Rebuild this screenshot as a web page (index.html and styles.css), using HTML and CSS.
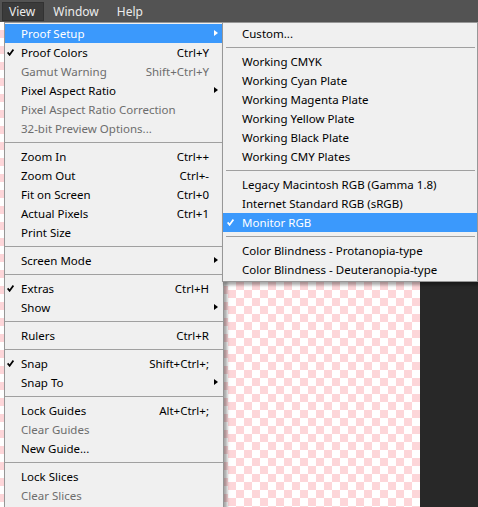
FILE: index.html
```html
<!DOCTYPE html>
<html>
<head>
<meta charset="utf-8">
<link rel="stylesheet" href="styles.css">
</head>
<body>
<div class="app">
  <div class="menubar">
    <div class="mb-item active">View</div>
    <div class="mb-item">Window</div>
    <div class="mb-item">Help</div>
  </div>
  <div class="workspace">
    <div class="strip"></div>
    <div class="canvas"></div>
    <div class="pasteboard"></div>
  </div>

  <div class="menu main-menu">
    <div class="row hl"><span class="label">Proof Setup</span><span class="arrow"></span></div>
    <div class="row"><span class="check"><svg width="7" height="7" viewBox="0 0 7 7"><path d="M0.6 3.4 L2.6 5.8 L6.4 0.6" fill="none" stroke="#000" stroke-width="1.7"/></svg></span><span class="label">Proof Colors</span><span class="key">Ctrl+Y</span></div>
    <div class="row dis"><span class="label">Gamut Warning</span><span class="key">Shift+Ctrl+Y</span></div>
    <div class="row"><span class="label">Pixel Aspect Ratio</span><span class="arrow"></span></div>
    <div class="row dis"><span class="label">Pixel Aspect Ratio Correction</span></div>
    <div class="row dis"><span class="label">32-bit Preview Options...</span></div>
    <div class="sep"></div>
    <div class="row"><span class="label">Zoom In</span><span class="key">Ctrl++</span></div>
    <div class="row"><span class="label">Zoom Out</span><span class="key">Ctrl+-</span></div>
    <div class="row"><span class="label">Fit on Screen</span><span class="key">Ctrl+0</span></div>
    <div class="row"><span class="label">Actual Pixels</span><span class="key">Ctrl+1</span></div>
    <div class="row"><span class="label">Print Size</span></div>
    <div class="sep"></div>
    <div class="row"><span class="label">Screen Mode</span><span class="arrow"></span></div>
    <div class="sep"></div>
    <div class="row"><span class="check"><svg width="7" height="7" viewBox="0 0 7 7"><path d="M0.6 3.4 L2.6 5.8 L6.4 0.6" fill="none" stroke="#000" stroke-width="1.7"/></svg></span><span class="label">Extras</span><span class="key">Ctrl+H</span></div>
    <div class="row"><span class="label">Show</span><span class="arrow"></span></div>
    <div class="sep"></div>
    <div class="row"><span class="label">Rulers</span><span class="key">Ctrl+R</span></div>
    <div class="sep"></div>
    <div class="row"><span class="check"><svg width="7" height="7" viewBox="0 0 7 7"><path d="M0.6 3.4 L2.6 5.8 L6.4 0.6" fill="none" stroke="#000" stroke-width="1.7"/></svg></span><span class="label">Snap</span><span class="key">Shift+Ctrl+;</span></div>
    <div class="row"><span class="label">Snap To</span><span class="arrow"></span></div>
    <div class="sep"></div>
    <div class="row"><span class="label">Lock Guides</span><span class="key">Alt+Ctrl+;</span></div>
    <div class="row dis"><span class="label">Clear Guides</span></div>
    <div class="row"><span class="label">New Guide...</span></div>
    <div class="sep"></div>
    <div class="row"><span class="label">Lock Slices</span></div>
    <div class="row dis"><span class="label">Clear Slices</span></div>
  </div>

  <div class="menu sub-menu">
    <div class="row"><span class="label">Custom...</span></div>
    <div class="sep"></div>
    <div class="row"><span class="label">Working CMYK</span></div>
    <div class="row"><span class="label">Working Cyan Plate</span></div>
    <div class="row"><span class="label">Working Magenta Plate</span></div>
    <div class="row"><span class="label">Working Yellow Plate</span></div>
    <div class="row"><span class="label">Working Black Plate</span></div>
    <div class="row"><span class="label">Working CMY Plates</span></div>
    <div class="sep"></div>
    <div class="row"><span class="label">Legacy Macintosh RGB (Gamma 1.8)</span></div>
    <div class="row"><span class="label">Internet Standard RGB (sRGB)</span></div>
    <div class="row hl"><span class="check"><svg width="7" height="7" viewBox="0 0 7 7"><path d="M0.6 3.4 L2.6 5.8 L6.4 0.6" fill="none" stroke="#fff" stroke-width="1.7"/></svg></span><span class="label">Monitor RGB</span></div>
    <div class="sep"></div>
    <div class="row"><span class="label">Color Blindness - Protanopia-type</span></div>
    <div class="row"><span class="label">Color Blindness - Deuteranopia-type</span></div>
  </div>
</div>
</body>
</html>
```
FILE: styles.css
```css
html, body {
  margin: 0;
  padding: 0;
}
body {
  width: 478px;
  height: 507px;
  overflow: hidden;
  background: #282828;
  font-family: "Noto Sans", "Open Sans", sans-serif;
  font-size: 11.5px;
}
.app {
  position: relative;
  width: 478px;
  height: 507px;
  overflow: hidden;
}
.menubar {
  height: 22px;
  background: #535353;
  display: flex;
  align-items: flex-start;
  padding-left: 2px;
  box-sizing: border-box;
}
.mb-item {
  height: 19px;
  margin-top: 2px;
  line-height: 17px;
  padding: 0 8px;
  color: #ececec;
  font-size: 12px;
  box-sizing: border-box;
  border: 1px solid transparent;
}
.mb-item.active {
  background: #3b3b3b;
  border-color: #323232;
  padding: 0 8px 0 6px;
}
.workspace {
  height: 485px;
  display: grid;
  grid-template-columns: 228px 192px 1fr;
}
.strip {
  background-color: #f3f3f3;
  background-image: conic-gradient(#fdd6d9 25%, #fff 0 50%, #fdd6d9 0 75%, #fff 0);
  background-size: 16px 16px;
}
.canvas {
  background-color: #fff;
  background-image: conic-gradient(#fdd6d9 25%, #fff 0 50%, #fdd6d9 0 75%, #fff 0);
  background-size: 16px 16px;
  background-position: 0 4px;
}
.pasteboard {
  background: #282828;
}
.menu {
  position: absolute;
  background: #f0f0f0;
  border: 1px solid #979797;
  box-sizing: border-box;
  padding: 1px 0 2px;
  color: #000;
}
.main-menu {
  left: 4px;
  top: 22px;
  width: 220px;
  box-shadow: 3px 3px 3px rgba(0, 0, 0, 0.35);
}
.sub-menu {
  left: 222px;
  top: 22px;
  width: 256px;
  box-shadow: 2px 3px 3px rgba(0, 0, 0, 0.35);
}
.row {
  position: relative;
  height: 19px;
  line-height: 19px;
  display: flex;
  padding: 0 14px 0 16px;
  white-space: nowrap;
}
.sub-menu .row {
  padding-left: 19px;
}
.row.hl {
  background: #3b99fc;
  color: #fff;
}
.row.dis {
  color: #6d6d6d;
}
.key {
  margin-left: auto;
}
.check {
  position: absolute;
  left: 2px;
  top: 6px;
  width: 7px;
  height: 7px;
  display: flex;
}
.sub-menu .check {
  left: 4px;
}
.arrow {
  position: absolute;
  right: 5px;
  top: 6px;
  width: 0;
  height: 0;
  border-top: 3.5px solid transparent;
  border-bottom: 3.5px solid transparent;
  border-left: 4px solid #000;
}
.row.hl .arrow {
  border-left-color: #fff;
}
.sep {
  height: 1px;
  margin: 4px 0;
  background: #a0a0a0;
}
.sub-menu .sep {
  margin: 4px 2px 4px 3px;
}
```
